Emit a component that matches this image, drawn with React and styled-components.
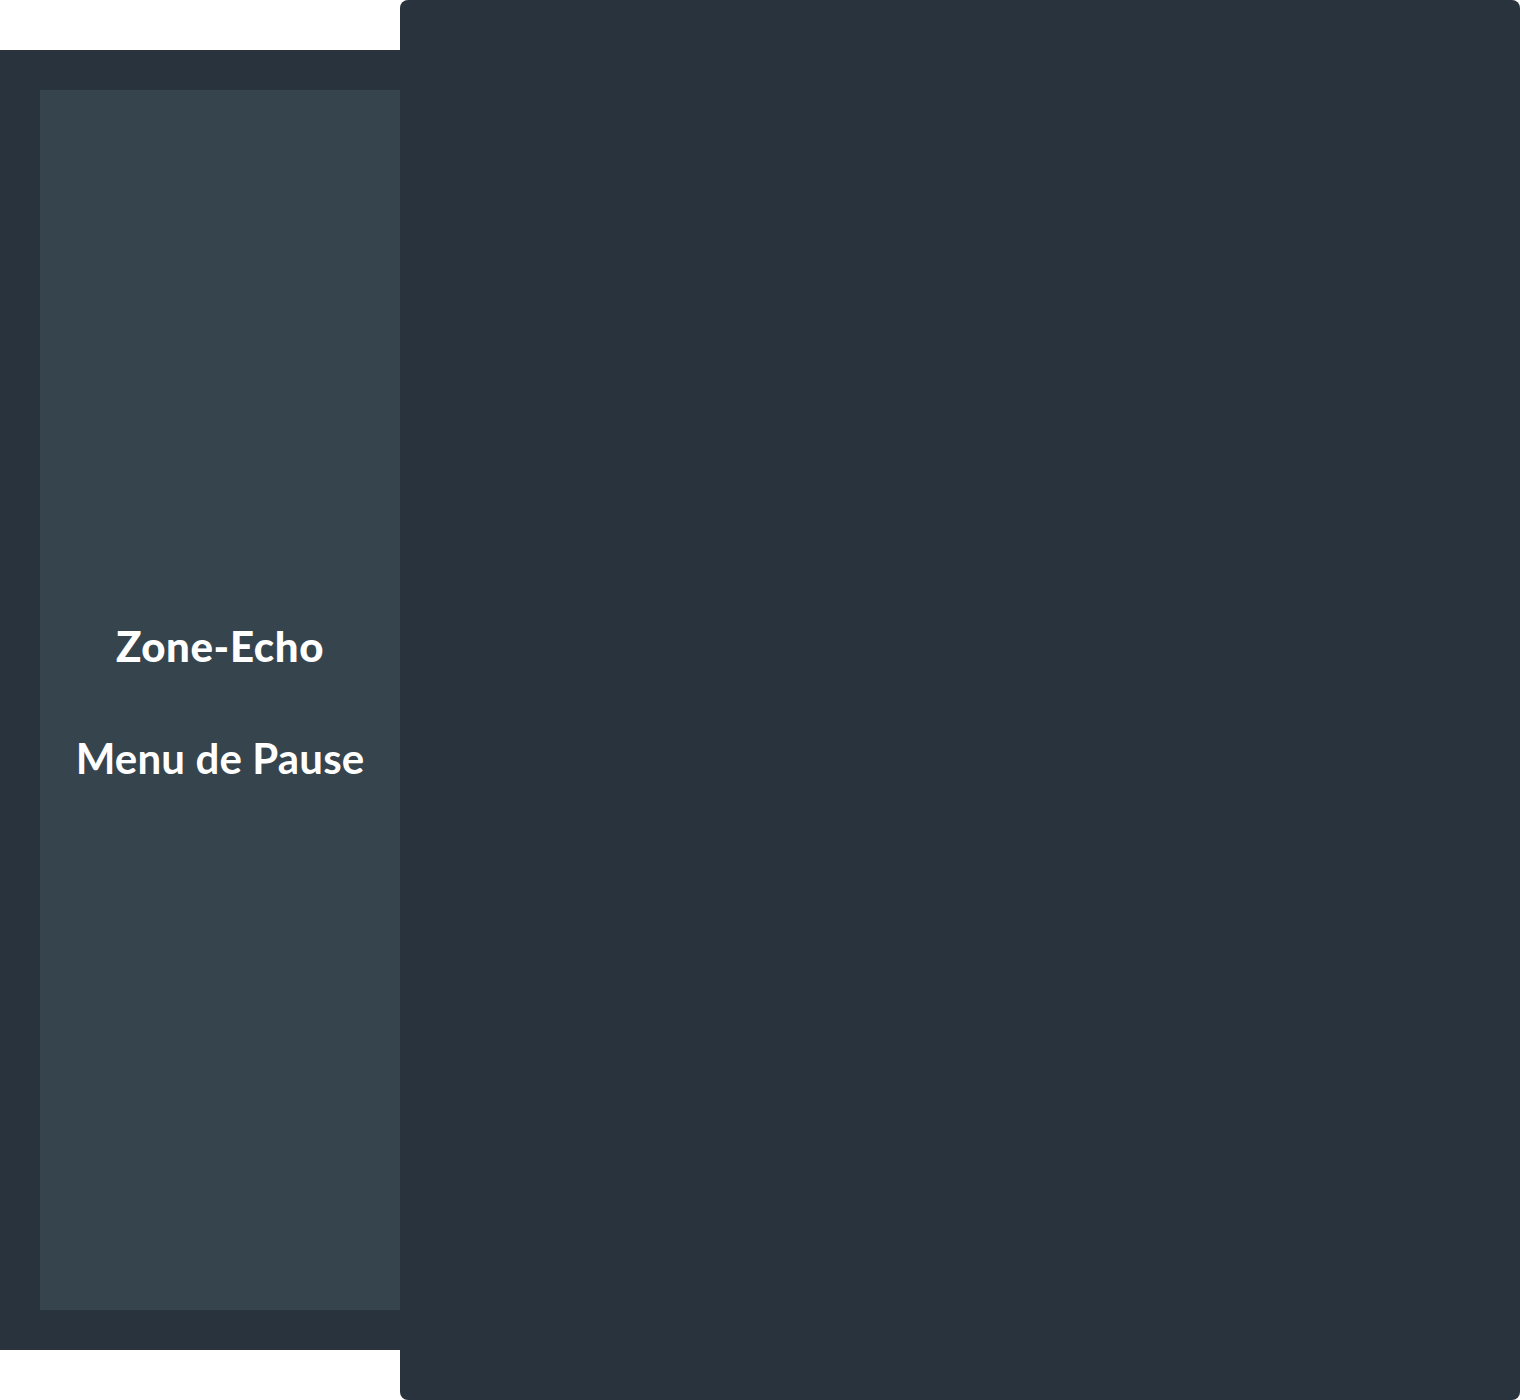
import React from "react";
import styled, { createGlobalStyle } from "styled-components";

const Global = createGlobalStyle`
  html, body { margin: 0; padding: 0; background: #ffffff; }
  body { font-family: Lato, "Open Sans", sans-serif; }
`;

const Page = styled.div`
  display: flex;
  align-items: center;
  width: 1520px;
  height: 1400px;
`;

const SideFrame = styled.aside`
  box-sizing: border-box;
  width: 400px;
  height: 1300px;
  padding: 40px 0 40px 40px;
  background: #29333d;
  display: flex;
`;

const SidePanel = styled.div`
  flex: 1;
  background: #36444e;
  display: flex;
  flex-direction: column;
  align-items: center;
  justify-content: center;
  gap: 62px;
  padding-top: 4px;
  color: #ffffff;
`;

const Title = styled.h1`
  margin: 0;
  font-size: ${(p) => p.$size}px;
  font-weight: ${(p) => p.$weight};
  line-height: 1.2;
  letter-spacing: ${(p) => p.$spacing}px;
`;

const Main = styled.main`
  width: 1120px;
  height: 1400px;
  background: #29333d;
  border-radius: 8px;
`;

export default function App() {
  return (
    <>
      <Global />
      <Page>
        <SideFrame>
          <SidePanel>
            <Title $size={42} $weight={900} $spacing={0.6}>Zone-Echo</Title>
            <Title $size={42} $weight={700} $spacing={0.15}>Menu de Pause</Title>
          </SidePanel>
        </SideFrame>
        <Main />
      </Page>
    </>
  );
}
